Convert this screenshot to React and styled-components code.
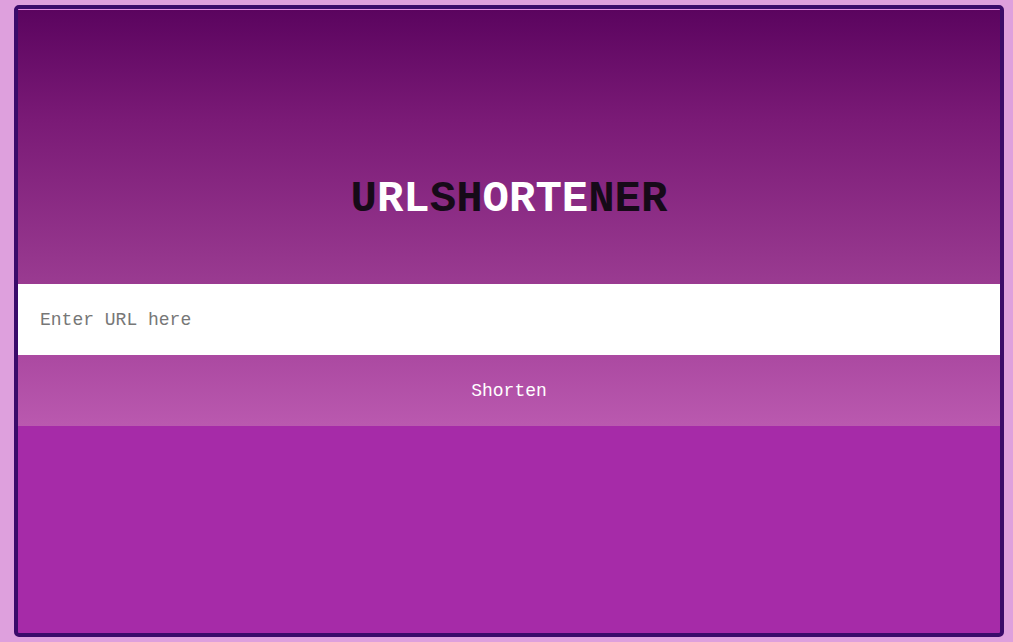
import React, { useState } from "react";
import styled, { createGlobalStyle } from "styled-components";

const GlobalStyle = createGlobalStyle`
  html, body {
    margin: 0;
    padding: 0;
    height: 100%;
    background: #dea0dd;
  }
  #root {
    height: 100%;
  }
`;

const Page = styled.div`
  box-sizing: border-box;
  height: 642px;
  padding: 5px 9px 5px 14px;
`;

const Card = styled.main`
  box-sizing: border-box;
  height: 100%;
  border: 4px solid #3a0b6a;
  border-radius: 5px;
  background: #a62ba8;
  display: flex;
  flex-direction: column;
  overflow: hidden;
  font-family: "Courier New", "Liberation Mono", monospace;
`;

const Header = styled.header`
  box-sizing: border-box;
  height: 275px;
  border-top: 1px solid #e28fe0;
  background: linear-gradient(to bottom, #5b045f 0%, #7a1a76 40%, #9a3b91 100%);
  display: flex;
  align-items: flex-end;
  justify-content: center;
  padding-bottom: 60px;
`;

const Title = styled.h1`
  margin: 0;
  font-size: 44px;
  font-weight: 700;
  line-height: 50px;
  letter-spacing: 0;
`;

const Letters = styled.span`
  color: ${(p) => (p.$light ? "#ffffff" : "#160a18")};
`;

const Input = styled.input`
  box-sizing: border-box;
  height: 71px;
  width: 100%;
  border: none;
  outline: none;
  background: #ffffff;
  padding: 0 22px;
  font-family: inherit;
  font-size: 18px;
  color: #333;

  &::placeholder {
    color: #777777;
  }
`;

const Button = styled.button`
  height: 71px;
  width: 100%;
  border: none;
  background: linear-gradient(to bottom, #ab49a1, #ba59af);
  color: #ffffff;
  font-family: inherit;
  font-size: 18px;
  cursor: pointer;
`;

const Result = styled.div`
  flex: 1;
`;

const parts = [
  ["U", false],
  ["RL", true],
  ["SH", false],
  ["ORTE", true],
  ["NER", false],
];

export default function App() {
  const [url, setUrl] = useState("");

  return (
    <>
      <GlobalStyle />
      <Page>
        <Card>
          <Header>
            <Title>
              {parts.map(([text, light]) => (
                <Letters key={text} $light={light}>
                  {text}
                </Letters>
              ))}
            </Title>
          </Header>
          <Input
            type="text"
            placeholder="Enter URL here"
            value={url}
            onChange={(e) => setUrl(e.target.value)}
          />
          <Button type="button">Shorten</Button>
          <Result />
        </Card>
      </Page>
    </>
  );
}
